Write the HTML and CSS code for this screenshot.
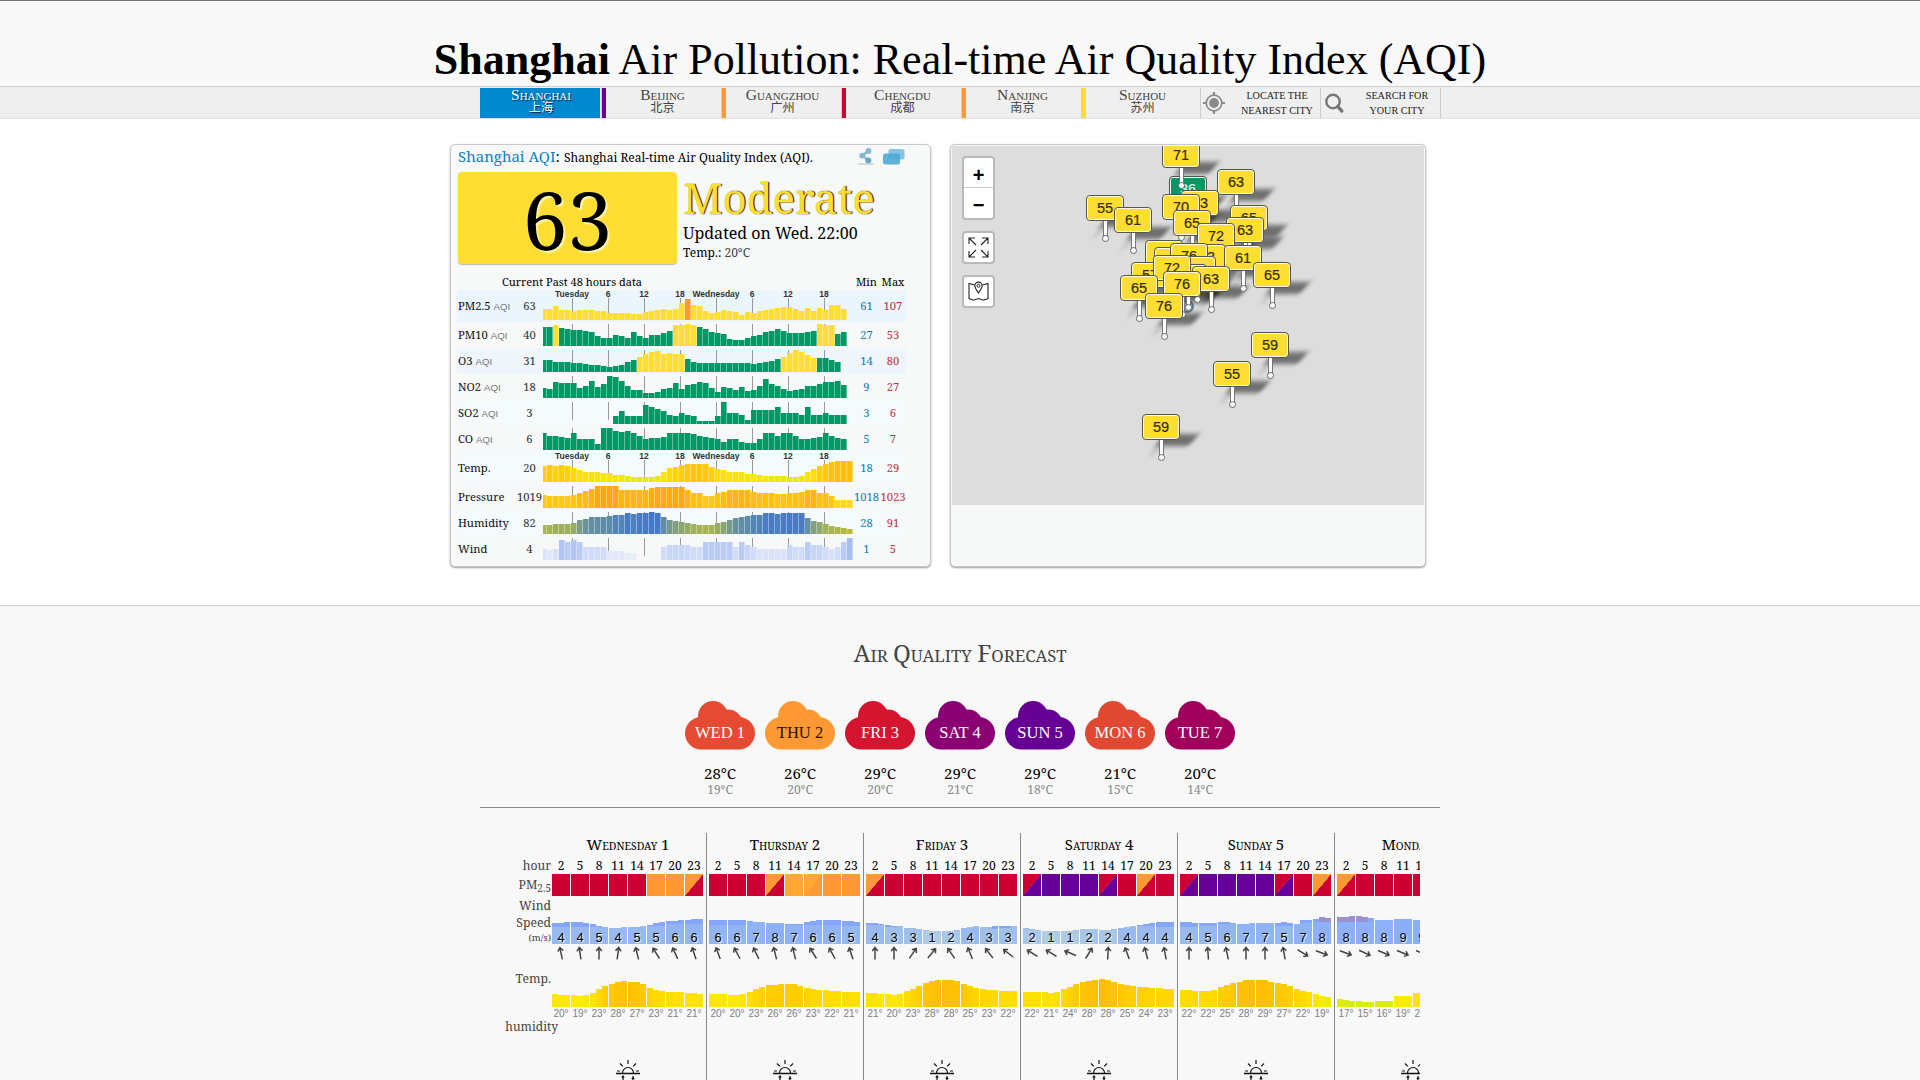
FILE: index.html
```html
<!DOCTYPE html>
<html lang="en">
<head>
<meta charset="utf-8">
<title>Shanghai Air Pollution: Real-time Air Quality Index (AQI)</title>
<link rel="stylesheet" href="styles.css">
</head>
<body>
<header class="top"><h1><b>Shanghai</b> Air Pollution: Real-time Air Quality Index (AQI)</h1></header>
<nav class="cities">
  <div class="tabs">
    <a class="tab active"><span>Shanghai</span><small>上海</small></a>
    <a class="tab purple"><span>Beijing</span><small>北京</small></a>
    <a class="tab orange"><span>Guangzhou</span><small>广州</small></a>
    <a class="tab red"><span>Chengdu</span><small>成都</small></a>
    <a class="tab orange"><span>Nanjing</span><small>南京</small></a>
    <a class="tab yellow"><span>Suzhou</span><small>苏州</small></a>
    <a class="tool">
      <svg width="22" height="22" viewBox="0 0 22 22"><circle cx="11" cy="11" r="7.8" fill="none" stroke="#8a8a8a" stroke-width="1.7"/><circle cx="11" cy="11" r="4.9" fill="#8a8a8a"/><path d="M11 0v4M11 18v4M0 11h4M18 11h4" stroke="#8a8a8a" stroke-width="2.2"/></svg>
      <em>LOCATE THE<br>NEAREST CITY</em>
    </a>
    <a class="tool last">
      <svg width="22" height="22" viewBox="0 0 22 22"><circle cx="10" cy="9.5" r="6.7" fill="none" stroke="#777" stroke-width="2.4"/><path d="M14.6 14.4l4.2 4.6" stroke="#777" stroke-width="3.4" stroke-linecap="round"/></svg>
      <em>SEARCH FOR<br>YOUR CITY</em>
    </a>
  </div>
</nav>

<main class="cards">
  <section class="card now">
    <div class="caption">
      <span class="lead"><i>Shanghai AQI</i>:</span>
      <span class="desc">Shanghai Real-time Air Quality Index (AQI).</span>
      <svg class="share" width="16" height="17" viewBox="0 0 16 17"><path d="M10.5 3L4.5 7.500L10.500 12.500" fill="none" stroke="#8dbbd6" stroke-width="2.600"/><circle cx="10.500" cy="2.900" r="2.900" fill="#85b8d6"/><circle cx="4.200" cy="7.600" r="2.900" fill="#85b8d6"/><circle cx="10.300" cy="12.400" r="3" fill="#6fa6c8"/><path d="M0 16h15.500" stroke="#c2c8ca" stroke-width="1.300"/></svg>
      <svg class="chat" width="22" height="16" viewBox="0 0 22 16"><rect x="5.500" y="0" width="16" height="10.500" rx="2.500" fill="#82c4e2"/><rect x="0" y="4.500" width="17" height="11" rx="2.500" fill="#4aa9d4" opacity=".88"/></svg>
    </div>
    <div class="status">
      <div class="aqi">63</div>
      <div class="summary">
        <div class="level">Moderate</div>
        <div class="updated">Updated on Wed. 22:00</div>
        <div class="temp">Temp.: <span>20°C</span></div>
      </div>
    </div>
    <div class="history">
      <div class="hrow head"><span>Current</span><span>Past 48 hours data</span><span>Min</span><span>Max</span></div>
      <div id="history"></div>
    </div>
  </section>

  <section class="card where">
    <div class="map" id="map">
      <div class="ctl zoomer"><span>+</span><span>−</span></div>
      <div class="ctl full"><svg width="21" height="21" viewBox="0 0 21 21"><path d="M1 7V1h6M1 1l7 7M14 1h6v6M20 1l-7 7M1 14v6h6M1 20l7-7M20 14v6h-6M20 20l-7-7" fill="none" stroke="#222" stroke-width="1.100"/></svg></div>
      <div class="ctl place"><svg width="21" height="21" viewBox="0 0 21 21"><path d="M6.500 4L1 2.500V17.500L5.500 19.200L10.500 17.500L15.500 19.200L20 17.500V2.500L14.500 4" fill="none" stroke="#222" stroke-width="1.100"/><path d="M10.500 12C8 8.500 6.800 6.800 6.800 4.800a3.700 3.700 0 0 1 7.400 0C14.200 6.800 13 8.500 10.500 12z" fill="#fff" stroke="#222" stroke-width="1.100"/><circle cx="10.500" cy="4.800" r="1.500" fill="none" stroke="#222"/></svg></div>
      <i class="here"></i>
    </div>
  </section>
</main>

<section class="forecast">
  <h2 class="caps"><span>Air</span> <span>Quality</span> <span>Forecast</span></h2>
  <div class="clouds" id="clouds"></div>
  <hr>
  <div class="detail">
    <div class="labels">
      <span class="l-hour">hour</span>
      <span class="l-pm">PM<sub>2.5</sub></span>
      <span class="l-wind">Wind</span>
      <span class="l-speed">Speed</span>
      <span class="l-ms">(m/s)</span>
      <span class="l-temp">Temp.</span>
      <span class="l-hum">humidity</span>
    </div>
    <div class="days" id="days"></div>
  </div>
</section>
<script src="app.js"></script>
</body>
</html>
```

FILE: styles.css
```css
* { box-sizing: border-box; }
body { margin: 0; height: 1080px; overflow: hidden; background: #fff; color: #000; font-family: "Noto Serif", "DejaVu Serif Condensed", serif; }
.top { height: 86px; background: #f8f8f8; border-top: 1px solid #777; padding-top: 34px; }
h1 { margin: 0; text-align: center; font: 44px/49px "Liberation Serif", serif; white-space: nowrap; }
.cities { height: 33px; background: #efefef; border-top: 1px solid #cfcfcf; border-bottom: 1px solid #e2e2e2; }
.tabs { width: 961px; margin: 1px auto 0 480px; display: flex; height: 30px; }
.tab { width: 120px; display: flex; flex-direction: column; align-items: center; border-left: 5px solid; padding-right: 1px; font-family: "Liberation Serif", "Noto Sans CJK SC", serif; color: #444; }
.tab span { font-size: 15.500px; line-height: 14px; font-variant: small-caps; }
.tab small { font: 12.200px/14px "Liberation Serif", "Noto Sans CJK SC", serif; margin-top: -1px; }
.active { background: #0087cd; color: #fff; border-left-color: #0087cd; text-shadow: 1px 1px 1px #024; padding-right: 3px; }
.purple { border-left-color: #6a0098; }
.orange { border-left-color: #ff9933; }
.red { border-left-color: #cc0033; }
.yellow { border-left-color: #ffde33; }
.tab:not(.active) { box-shadow: -1px 0 0 #ccc; margin-left: 2px; width: 118px; border-left-width: 4px; }
.tool { width: 120px; border-left: 1px solid #ccc; display: flex; align-items: center; padding-left: 2px; }
.tool.last { width: 121px; border-right: 1px solid #ccc; }
.tool em { flex: 1; font: 10.200px/15px "Liberation Serif", serif; text-align: center; color: #222; padding-left: 9px; white-space: nowrap; }

.cards { display: flex; gap: 19px; padding: 25px 0 0 450px; height: 486px; align-items: flex-start; }
.card { height: 423px; background: #f7f9f9; border: 1px solid #c9c9c9; border-radius: 5px; box-shadow: 0 1px 2px rgba(0,0,0,.4); }
.now { width: 481px; padding: 2px 6px 0 7px; }
.where { width: 476px; padding: 1px; overflow: hidden; }
.caption { display: flex; height: 25px; align-items: flex-start; }
.lead { font-size: 15px; line-height: 19px; white-space: nowrap; width: 106px; }
.lead i { font-style: normal; color: #0e81c4; }
.desc { font-size: 12px; line-height: 21px; width: 294px; white-space: nowrap; }
.share { margin-top: 1px; margin-right: 9px; }
.chat { margin-top: 2px; }
.status { display: flex; gap: 6px; height: 95px; }
.aqi { width: 219px; height: 92px; background: #ffde33; border-radius: 4px; box-shadow: 0 1px 1px #bbb; font-size: 80px; line-height: 94px; text-align: center; text-shadow: 2px 2px 1px #fff4a8; }
.level { font-size: 42px; line-height: 56px; height: 56px; color: #ffde33; text-shadow: 1px 0 1px #222, 1px 0 1px #555; margin-top: -2px; }
.updated { font-size: 16px; line-height: 20px; height: 20px; margin-top: -3px; }
.temp { font-size: 12px; line-height: 18px; margin-top: 1px; }
.temp span { color: #444; }
.hrow { display: grid; grid-template-columns: 59px 27px 310px 27px 26px; align-items: center; height: 26px; font-size: 11.200px; margin-left: -1px; width: 449px; text-align: center; }
.hrow.head { height: 23px; font-size: 11px; grid-template-columns: 87px 309px 27px 26px; align-items: end; line-height: 17px; }
.head span:nth-child(1) { text-align: right; padding-right: 1px; }
.head span:nth-child(2) { text-align: left; padding-left: 2px; }
.hrow.axis { height: 32px; }
.hrow > .name, .hrow > .cur, .hrow > .min, .hrow > .max { padding-bottom: 2px; }
.hrow .name { text-align: left; padding-left: 1px; white-space: nowrap; color: #111; }
.name small { font: 9.700px "Liberation Sans", sans-serif; color: #777; }
.cur { color: #333; }
.min { color: #0e7fb8; }
.max { color: #b93440; }
.hrow.r0 { background: #ebf5fc; }
.hrow.r2 { background: #eef6fc; }
.hrow.r4, .hrow.r6, .hrow.r8 { background: #f5fafc; }
.plot { align-self: end; height: 24px; padding-bottom: 2px; }
.bars { display: flex; align-items: flex-end; height: 22px; background: linear-gradient(90deg, #999 1px, transparent 1px) 29px 0 / 36px 18px repeat-x; }
.bars b { width: 6px; border-right: 1px solid rgba(255,255,255,.38); }
.bars b:first-child { width: 4px; }
.ticks { display: flex; margin-left: 11px; height: 8px; font: bold 8.500px/8px "Liberation Sans", sans-serif; color: #333; }
.ticks span { width: 36px; text-align: center; display: flex; justify-content: center; }
.axis .plot { height: 32px; }

.map { position: relative; height: 359px; background: #ddd; overflow: hidden; }
.ctl { position: absolute; left: 10px; width: 33px; height: 33px; background: #fff; border: 2px solid #b9b9b9; border-radius: 4px; display: flex; align-items: center; justify-content: center; }
.zoomer { top: 10px; height: 64px; flex-direction: column; font: bold 20px/30px "Liberation Sans", sans-serif; }
.zoomer span { height: 30px; width: 29px; text-align: center; }
.zoomer span:first-child { border-bottom: 1px solid #ccc; line-height: 35px; }
.zoomer span:last-child { line-height: 35px; }
.full { top: 85px; }
.place { top: 129px; }
.pin { position: absolute; width: 38px; height: 45px; }
.pin b { display: block; width: 38px; height: 26px; background: #ffde33; border: 1px solid #555; border-radius: 4px; box-shadow: inset 0 0 0 1px #fffbe0; font: 14.500px/25px "Liberation Sans", sans-serif; color: #322c0c; text-align: center; -webkit-text-stroke: .2px #322c0c; }
.pin.good b { background: #009966; color: #fff; -webkit-text-stroke: 0; }
.pin u { position: absolute; left: 17px; top: 26px; width: 5px; height: 16px; background: #fff; border: solid #777; border-width: 0 1px; }
.pin i { position: absolute; left: 16px; top: 40px; width: 7px; height: 7px; border-radius: 4px; background: #fff; border: 1px solid #666; }
.shade { position: absolute; width: 34px; height: 12px; background: rgba(0,0,0,.5); transform: skewX(-40deg); filter: blur(2.500px); }
.shade::after { content: ""; position: absolute; left: 3px; top: 10px; width: 3px; height: 12px; background: rgba(0,0,0,.2); }
.here { position: absolute; left: 229px; top: 154px; width: 13px; height: 13px; border-radius: 50%; background: rgba(70,120,150,.3); border: 2px solid #5c8199; }

.forecast { background: #f8f8f8; border-top: 1px solid #ccc; height: 475px; }
.caps { text-transform: uppercase; font-weight: 400; text-align: center; }
.caps span { display: inline-block; }
h2 { margin: 0; padding-top: 30px; font-size: 16.800px; line-height: 34px; height: 64px; color: #444; word-spacing: 1px; }
h2 span::first-letter { font-size: 24px; line-height: 34px; }
.clouds { display: flex; justify-content: center; gap: 10px; margin-top: 31px; }
.cloud { width: 70px; text-align: center; position: relative; }
.cloud svg { display: block; }
.cloud strong { position: absolute; left: 0; right: 0; top: 22px; font: 16.500px/20px "Liberation Serif", serif; color: #fff; }
.cloud strong.dark { color: #221100; }
.hi { font-size: 15px; line-height: 18px; margin-top: 14px; }
.lo { font-size: 12px; line-height: 15px; color: #888; }
hr { width: 960px; margin: 10px auto 25px; border: 0; border-top: 1px solid #888; }
.detail { display: flex; width: 940px; margin-left: 480px; height: 247px; overflow: hidden; }
.labels { width: 72px; padding: 22px 1px 0 0; display: flex; flex-direction: column; align-items: flex-end; font-size: 12.200px; color: #444; }
.labels sub { font-size: 10px; line-height: 0; }
.labels span { display: block; white-space: nowrap; }
.l-hour { height: 21px; line-height: 21px; }
.l-pm { height: 18px; line-height: 17px; }
.l-wind { height: 22px; line-height: 23px; }
.l-speed { height: 14px; line-height: 14px; }
.l-ms { height: 16px; line-height: 16px; font-size: 9.500px; }
.l-temp { height: 66px; line-height: 66px; }
.l-hum { height: 30px; line-height: 30px; margin-right: -7px; font-size: 12px; }
.days { display: flex; width: 868px; overflow: hidden; }
.day { flex: none; width: 155px; margin-right: 2px; padding-right: 2px; border-right: 1px solid #888; height: 247px; }
.day h3 { margin: 0; width: 152px; font-size: 10.500px; line-height: 23px; height: 24px; white-space: nowrap; word-spacing: 1px; }
.day h3 span::first-letter { font-size: 15px; line-height: 23px; }
.r { display: grid; grid-template-columns: repeat(8, 18px); column-gap: 1px; text-align: center; }
.hours { font-size: 12px; line-height: 17px; height: 17px; }
.hours span { display: flex; justify-content: center; }
.pm span { height: 22px; }
.wind { height: 48px; align-items: end; }
.cell { position: relative; display: flex; align-items: flex-end; }
.cell b { width: 6px; }
.cell em { position: absolute; left: 0; right: 0; bottom: 0; font: 12.800px/13px "Liberation Sans", sans-serif; text-shadow: 1px 1px 1px #fff; }
.arrows { height: 18px; align-items: center; justify-items: center; }
.arrows svg { display: block; }
.temps { height: 45px; align-items: end; }
.degs { font: 10px/13px "Liberation Sans", sans-serif; color: #808080; }
.degs span { display: flex; justify-content: center; }
.sun { display: block; margin: 40px 0 0 64px; }
```

FILE: app.js
```javascript
const el = id => document.getElementById(id);
const mix = (stops, v) => {
  let i = 0;
  while (i < stops.length - 2 && v > stops[i + 1][0]) i++;
  const [a, ca] = stops[i], [b, cb] = stops[i + 1];
  const t = Math.max(0, Math.min(1, (v - a) / (b - a)));
  return `rgb(${ca.map((c, k) => Math.round(c + (cb[k] - c) * t))})`;
};
const warm = [[12, [222, 236, 16]], [22, [245, 232, 0]], [36, [255, 226, 0]], [48, [255, 208, 0]], [66, [255, 188, 8]]];
const press = [[25, [255, 216, 26]], [38, [255, 200, 14]], [50, [255, 188, 20]], [66, [255, 166, 20]]];
const humid = [[15, [186, 188, 50]], [30, [160, 178, 92]], [45, [110, 148, 150]], [56, [88, 136, 178]], [64, [68, 120, 200]]];
const windy = [[15, [238, 242, 252]], [30, [222, 230, 250]], [46, [200, 214, 246]], [66, [168, 190, 240]]];
const G = '#009966', Y = '#ffde33', O = '#ff9933';

// Each series: label, unit, current, min, max, hourly levels, colour of hour k at level v
const series = [
  ['PM2.5', 'AQI', 63, 61, 107, [34,34,43,31,31,28,31,31,31,28,28,20,22,22,20,19,17,25,28,30,34,30,34,50,64,45,41,28,22,24,30,27,25,15,25,22,27,31,32,35,40,38,32,27,37,27,35,29,46,46,34,18], k => k === 24 ? O : Y],
  ['PM10', 'AQI', 40, 27, 53, [56,58,62,54,51,48,47,44,41,31,24,24,32,30,23,42,31,24,32,33,40,46,62,63,66,62,58,50,41,40,37,22,17,17,24,29,33,43,44,52,46,38,40,38,41,46,66,62,62,37,41], k => k === 2 || (k > 21 && k < 26) || (k > 45 && k < 49) ? Y : G],
  ['O3', 'AQI', 31, 14, 80, [35,35,31,30,29,26,26,24,21,21,19,16,18,22,31,37,44,54,60,62,55,58,55,55,40,29,27,26,28,28,26,28,26,28,26,23,26,30,34,39,45,57,66,60,51,43,42,41,37,29], k => (k > 15 && k < 24) || (k > 39 && k < 46) ? Y : G],
  ['NO2', 'AQI', 18, 9, 27, [30,28,49,45,45,45,30,35,51,34,43,65,62,50,37,24,25,16,15,19,26,29,46,26,40,42,49,44,30,19,34,30,25,33,20,25,37,56,42,37,27,22,23,28,37,36,42,49,47,52,40], () => G],
  ['SO2', 'AQI', 3, 3, 6, [0,0,0,0,0,0,0,0,0,0,0,0,24,40,24,24,24,58,52,46,38,28,24,32,26,24,10,10,10,24,66,34,34,26,12,42,42,42,42,50,34,34,34,26,50,26,26,34,26,26,26], () => G],
  ['CO', 'AQI', 6, 5, 7, [50,41,41,38,37,50,33,33,33,17,66,66,57,53,57,50,41,33,37,37,40,50,51,50,50,49,41,38,35,33,24,33,33,25,22,22,33,50,50,42,50,50,42,33,33,37,39,50,42,36,33], () => G],
  ['Temp.', '', 20, 18, 29, [49,50,47,50,47,41,35,30,29,29,28,26,22,20,17,16,16,16,14,19,31,41,46,50,53,55,55,54,46,39,35,31,29,29,25,25,21,19,18,17,17,14,14,18,31,38,48,54,60,63,64,64], (k, v) => mix(warm, v)],
  ['Pressure', '', 1019, 1018, 1023, [39,37,37,37,37,38,46,50,56,65,65,65,65,55,55,55,55,55,60,64,64,64,64,64,54,45,45,36,36,45,49,55,55,55,55,49,46,46,44,41,41,44,45,47,55,55,45,45,37,25,25,25], (k, v) => mix(press, v)],
  ['Humidity', '', 82, 28, 91, [27,27,31,31,31,33,41,46,50,51,52,53,58,58,63,60,62,63,66,64,52,43,39,36,33,30,27,26,27,32,36,42,49,51,53,57,58,62,62,60,62,63,62,62,49,39,35,30,25,22,19,16], (k, v) => mix(humid, v)],
  ['Wind', '', 4, 1, 5, [34,29,34,60,54,59,54,40,40,40,40,28,27,27,22,20,0,0,0,0,40,45,45,45,44,40,40,54,54,54,54,54,40,54,46,40,33,33,33,33,33,46,40,40,54,46,45,40,34,40,54,66], (k, v) => mix(windy, v)],
];
const ticks = '<div class="ticks">' + ['Tuesday', 6, 12, 18, 'Wednesday', 6, 12, 18].map(t => `<span>${t}</span>`).join('') + '</div>';
el('history').innerHTML = series.map(([name, unit, cur, lo, hi, vals, col], i) => `
  <div class="hrow r${i} ${i === 0 || i === 6 ? 'axis' : ''}">
    <span class="name">${name} <small>${unit}</small></span><span class="cur">${cur}</span>
    <div class="plot">${i === 0 || i === 6 ? ticks : ''}<div class="bars">${vals.slice(0, i < 6 ? 51 : 52).map((v, k) => `<b style="height:${(v / 3).toFixed(1)}px;background:${col(k, v)}"></b>`).join('')}</div></div>
    <span class="min">${lo}</span><span class="max">${hi}</span>
  </div>`).join('');

// Stations: AQI, left and top on the map, optional stacking level (top by default)
const pins = [
  [71,210,-4,40],[36,217,30],[63,265,23],[63,229,44],[70,210,48],[55,134,49],[61,162,61],[65,278,59],[65,221,64],[63,274,71],[72,245,77],
  [68,193,94],[72,202,101,96],[76,218,97,99],[63,236,98],[61,272,99],[72,201,109,119],[69,226,110],[57,179,116],[68,217,118],[65,301,116],[63,240,120],[76,211,125],[65,168,129],[76,193,147],
  [59,299,186],[55,261,215],[59,190,268],
];
const level = p => p[3] ?? p[2];
el('map').insertAdjacentHTML('beforeend', pins.map(([, x, y]) => `<div class="shade" style="left:${x + 18}px;top:${y + 20}px"></div>`).join('') +
  [...pins].sort((a, b) => level(a) - level(b)).map(([v, x, y]) => `<div class="pin ${v < 50 ? 'good' : ''}" style="left:${x}px;top:${y}px"><b>${v}</b><u></u><i></i></div>`).join(''));

el('clouds').innerHTML = [
  ['WED 1', '#e54b33', 28, 19], ['THU 2', '#ff9933', 26, 20], ['FRI 3', '#d5142f', 29, 20], ['SAT 4', '#8b0072', 29, 21],
  ['SUN 5', '#660094', 29, 18], ['MON 6', '#e04832', 21, 15], ['TUE 7', '#a0005c', 20, 14],
].map(([d, c, hi, lo], i) => `<div class="cloud"><svg width="70" height="49" viewBox="0 0 70 49" fill="${c}"><rect y="16" width="70" height="32.5" rx="16.2"/><circle cx="28" cy="15" r="15"/><circle cx="43" cy="23.500" r="15"/></svg><strong class="${i === 1 ? 'dark' : ''}">${d}</strong><div class="hi">${hi}°C</div><div class="lo">${lo}°C</div></div>`).join('');

const R = '#cc0033', P = '#660099';
const fills = { r: R, o: O, y: '#ffa933', p: P,
  a: `linear-gradient(130deg,${O} 50%,${R} 51%)`, b: `linear-gradient(130deg,${R} 49%,#b33a9a 50%,${P} 52%)`, c: `linear-gradient(130deg,#ffa933 50%,${O} 51%)` };
const days = [
  ['Wednesday 1', 'rrrrrooa', [4,4,5,4,5,5,6,6], [63,63,65,65,65,63,59,55,51,49,49,50,51,51,53,57,62,66,69,70,72,73,74,74], [51,51,51,47,51,55,59,60], [-12,-8,0,8,-14,-32,-25,-18], [38,37,36,35,34,35,43,53,64,70,75,78,76,75,69,58,51,48,46,45,44,43,41,40], [20,19,23,28,27,23,21,21]],
  ['Thursday 2', 'rrraycoo', [6,6,7,8,7,6,6,5], [73,73,73,72,72,72,70,66,66,64,64,62,60,60,59,66,69,71,71,71,71,69,69,67], [57,57,66,62,58,57,57,54], [-20,-28,-26,-14,-14,-32,-28,-18], [38,38,38,37,37,40,46,54,61,65,67,68,68,68,64,58,53,51,50,48,47,46,45,44], [20,20,23,26,26,23,22,21]],
  ['Friday 3', 'arrrrrrr', [4,3,3,1,2,4,3,3], [62,62,60,57,55,53,49,47,46,42,40,38,38,38,41,48,52,53,52,51,54,55,55,53], [57,52,46,40,38,49,45,47], [0,0,35,40,-35,-22,-38,-52], [42,41,39,38,37,40,47,55,63,72,78,81,81,80,77,69,62,57,54,52,50,49,48,47], [21,20,23,28,28,25,23,22]],
  ['Saturday 4', 'bpppbrar', [2,1,1,2,2,4,4,4], [47,45,42,40,39,39,39,39,42,45,45,45,42,43,45,48,51,53,56,60,63,65,66,66], [42,40,40,44,42,49,53,51], [-58,-58,-68,32,3,-20,-15,-10], [45,45,44,44,43,45,53,60,68,75,79,82,84,80,75,70,66,63,61,59,57,56,54,53], [22,21,24,28,28,25,24,23]],
  ['Sunday 5', 'bppppbra', [4,5,6,7,7,5,7,8], [65,65,64,63,62,63,67,65,62,60,61,62,62,63,62,64,67,64,59,71,72,75,80,79], [51,55,60,62,63,54,63,65], [0,-4,-12,0,0,-10,122,110], [50,50,49,49,49,51,61,67,71,76,80,82,82,80,76,72,70,62,55,49,45,38,33,29], [22,22,25,28,29,27,22,19]],
  ['Monday 6', 'arrrrrrr', [8,8,8,9,9,8,8,7], [81,82,83,83,80,77,72,72,72,74,74,74,72,72,72,72,72,72,72,72,72,72,72,72], [66,66,72,74,72,72,72,72], [110,115,112,112,112,112,112,112], [24,20,18,17,14,16,17,17,17,34,34,34,42,42,42,44,44,44,40,40,40,38,38,38], [17,15,16,19,21,21,20,19]],
];
const hot = [[14, [212, 238, 20]], [24, [222, 236, 10]], [34, [250, 236, 0]], [45, [255, 224, 0]], [60, [255, 210, 0]], [84, [255, 188, 8]]];
const air = [[1, [176, 204, 224]], [4, [152, 186, 238]], [9, [138, 174, 248]]];
const cells = f => Array.from({ length: 8 }, (_, i) => f(i)).join('');
const sun = '<svg class="sun" width="24" height="20" viewBox="0 0 24 20" fill="none" stroke="#111" stroke-width="1.200"><path d="M0 13.500h24" stroke-width="1.500"/><path d="M6.500 13a5.500 5.500 0 0 1 11 0M12 0v4M4 3.500l2.800 2.800M20 3.500l-2.800 2.800M1 11h3M20 11h3M7 20v-4M5.800 17.500l1.200-1.500l1.200 1.500M17 16v4M15.800 18l1.200 1.300l1.200-1.300"/></svg>';
const gustTop = h => h > 26 ? '#9a92cc' : h < 18 ? '#9dbdec' : '#85a6fb';
const windBar = (h, b, v) => `<b style="height:${h.toFixed(1)}px;background:linear-gradient(0deg,${mix(air, v)} ${b.toFixed(1)}px,${gustTop(h)} ${b.toFixed(1)}px)"></b>`;
el('days').innerHTML = days.map(([name, pm, spd, gust, base, dir, t, deg]) => `
  <div class="day"><h3 class="caps">${name.split(' ').map(w => `<span>${w}</span>`).join(' ')}</h3>
    <div class="r hours">${cells(i => `<span>${2 + i * 3}</span>`)}</div>
    <div class="r pm">${cells(i => `<span style="background:${fills[pm[i]]}"></span>`)}</div>
    <div class="r wind">${cells(i => `<div class="cell">${[0, 1, 2].map(k => { const h = gust[i * 3 + k] / 3; return windBar(h, Math.min(h, base[i] / 3), spd[i]); }).join('')}<em>${spd[i]}</em></div>`)}</div>
    <div class="r arrows">${cells(i => `<svg width="12" height="14" viewBox="-6 -7 12 14" overflow="visible"><g transform="rotate(${dir[i]})"><path d="M0 6.500V-4.500M-2.800-2L0-5.500L2.800-2" fill="none" stroke="#444" stroke-width="1.500"/></g></svg>`)}</div>
    <div class="r temps">${cells(i => `<div class="cell">${[0, 1, 2].map(k => `<b style="height:${(t[i * 3 + k] / 3).toFixed(1)}px;background:${mix(hot, t[i * 3 + k])}"></b>`).join('')}</div>`)}</div>
    <div class="r degs">${cells(i => `<span>${deg[i]}°</span>`)}</div>
    ${sun}
  </div>`).join('');
```
